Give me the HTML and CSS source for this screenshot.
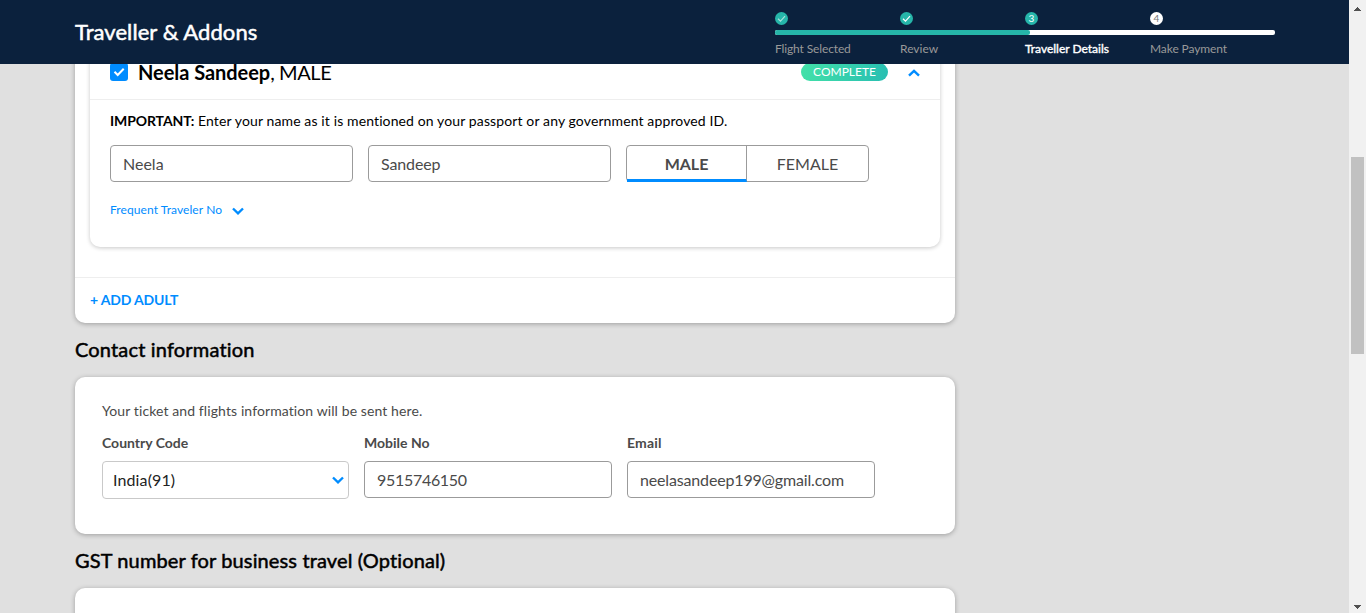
FILE: index.html
```html
<!DOCTYPE html>
<html lang="en">
<head>
<meta charset="utf-8">
<title>Traveller &amp; Addons</title>
<link rel="stylesheet" href="styles.css">
</head>
<body>
<div class="window">
  <div class="page">
    <header class="topbar">
      <h1 class="topbar-title">Traveller &amp; Addons</h1>
      <div class="stepper">
        <div class="step-row">
          <span class="dot dot-done dot-first"><svg class="tick" viewBox="0 0 13 13"><path d="M3 6.7l2.5 2.4 4.5-5"/></svg></span>
          <span class="dot dot-done"><svg class="tick" viewBox="0 0 13 13"><path d="M3 6.7l2.5 2.4 4.5-5"/></svg></span>
          <span class="dot dot-done">3</span>
          <span class="dot dot-next">4</span>
        </div>
        <div class="progress"><div class="progress-fill"></div></div>
        <div class="step-row step-labels">
          <span class="lbl-flight">Flight Selected</span><span class="lbl-review">Review</span><span class="current">Traveller Details</span><span class="lbl-pay">Make Payment</span>
        </div>
      </div>
    </header>
    <main class="content">
      <section class="card travellers">
        <div class="traveller">
          <div class="traveller-head">
            <span class="checkbox"><svg viewBox="0 0 18 18"><path d="M4.5 8.8l3.2 3.2 6-6.2"/></svg></span>
            <span class="traveller-name"><b>Neela Sandeep</b>, MALE</span>
            <span class="badge">COMPLETE</span>
            <svg class="chevron chevron-up" viewBox="0 0 12 8"><path d="M1 6.6l5-4.8 5 4.8"/></svg>
          </div>
          <div class="traveller-body">
            <p class="important"><b>IMPORTANT:</b> Enter your name as it is mentioned on your passport or any government approved ID.</p>
            <div class="name-row">
              <div class="field name-first">Neela</div>
              <div class="field name-last">Sandeep</div>
              <div class="gender"><span class="gender-on">MALE</span><span class="gender-off">FEMALE</span></div>
            </div>
            <div class="frequent"><span class="frequent-text">Frequent Traveler No</span><svg class="chevron" viewBox="0 0 12 8"><path d="M1 1.5l5 4.8 5-4.8"/></svg></div>
          </div>
        </div>
        <div class="add-row"><span class="add-adult">+ ADD ADULT</span></div>
      </section>
      <h2 class="heading heading-contact">Contact information</h2>
      <section class="card contact">
        <p class="hint">Your ticket and flights information will be sent here.</p>
        <div class="contact-grid">
          <div class="group"><span class="label label-country">Country Code</span>
            <div class="field select"><span class="country">India(91)</span><svg class="chevron" viewBox="0 0 12 8"><path d="M1 1.5l5 4.8 5-4.8"/></svg></div></div>
          <div class="group"><span class="label label-mobile">Mobile No</span><div class="field mobile">9515746150</div></div>
          <div class="group"><span class="label label-email">Email</span><div class="field email">neelasandeep199@gmail.com</div></div>
        </div>
      </section>
      <h2 class="heading heading-gst">GST number for business travel (Optional)</h2>
      <section class="card gst"></section>
    </main>
  </div>
  <div class="scrollbar">
    <svg class="arrow" viewBox="0 0 7 4"><path d="M0 4V3h1V2h1V1h1V0h1v1h1v1h1v1h1v1z"/></svg>
    <div class="thumb"></div>
    <svg class="arrow arrow-down" viewBox="0 0 7 4"><path d="M0 0v1h1v1h1v1h1v1h1V3h1V2h1V1h1V0z"/></svg>
  </div>
</div>
</body>
</html>
```
FILE: styles.css
```css
* { box-sizing: border-box; }
body { margin: 0; font-family: Lato, "Liberation Sans", sans-serif; font-variant-ligatures: none; color: #000; background: #e0e0e0; }
h1, h2, p { margin: 0; font-weight: 400; }
svg { display: block; fill: none; }
.window { display: flex; width: 1366px; height: 613px; overflow: hidden; }
.page { display: flex; flex-direction: column; width: 1349px; height: 613px; }
.topbar { display: flex; flex: none; justify-content: space-between; height: 64px; padding: 0 74px 0 75px; background: #0b213d; color: #fff; }
.topbar-title { font-size: 22px; line-height: 64px; letter-spacing: 0.07px; -webkit-text-stroke: 0.5px #fff; white-space: nowrap; }
.stepper { width: 500px; padding-top: 12px; }
.step-row { display: grid; grid-template-columns: repeat(4, 125px); }
.dot { display: flex; align-items: center; justify-content: center; width: 13px; height: 13px; border-radius: 50%; font-size: 10px; line-height: 13px; }
.dot-done { background: #26b5a9; }
.dot-first .tick { opacity: 0.6; }
.dot-next { background: #fff; color: #777; }
.tick { width: 13px; height: 13px; stroke: #fff; stroke-width: 1.2; }
.progress { height: 5px; margin-top: 5px; border-radius: 2px; background: #fff; }
.progress-fill { width: 255px; height: 5px; border-radius: 2px; background: #26b5a9; }
.step-labels { margin-top: 6px; font-size: 12px; line-height: 16px; color: #999; white-space: nowrap; }
.lbl-flight { letter-spacing: -0.13px; }
.lbl-pay { letter-spacing: -0.1px; }
.current { color: #fff; -webkit-text-stroke: 0.4px #fff; }
.content { flex: 1; min-height: 0; overflow: hidden; padding-left: 75px; }
.card { width: 880px; background: #fff; border-radius: 10px; box-shadow: 0 1px 5px rgba(0, 0, 0, 0.3); }
.travellers { height: 278px; margin-top: -19px; display: flex; flex-direction: column; }
.traveller { width: 850px; height: 202px; margin-left: 15px; border-radius: 0 0 10px 10px; box-shadow: 0 1px 4px rgba(0, 0, 0, 0.22); }
.traveller-head { display: flex; align-items: center; height: 55px; padding: 0 20px; border-bottom: 1px solid #eee; }
.checkbox { width: 18px; height: 18px; border-radius: 3px; background: #008cff; }
.checkbox svg { width: 18px; height: 18px; stroke: #fff; stroke-width: 2; }
.traveller-name { flex: 1; margin-left: 10px; font-size: 20px; line-height: 26px; letter-spacing: -0.4px; }
.traveller-name b { font-weight: 700; letter-spacing: -0.05px; }
.badge { width: 87px; height: 18px; margin-right: 20px; border-radius: 9px; background: linear-gradient(100deg, #43e1a8, #28beb2); color: #fff; font-size: 12px; line-height: 18px; text-align: center; }
.chevron { width: 12px; height: 8px; stroke: #008cff; stroke-width: 2.4; }
.chevron-up { margin-top: 1px; }
.traveller-body { padding: 11px 20px 0; }
.important { font-size: 14px; line-height: 20px; letter-spacing: 0.12px; white-space: nowrap; }
.important b { letter-spacing: -0.1px; }
.name-row { display: flex; gap: 15px; margin-top: 14px; }
.field { width: 243px; height: 37px; padding-left: 12px; border: 1px solid #9b9b9b; border-radius: 4px; color: #4a4a4a; font-size: 16px; line-height: 36px; white-space: nowrap; }
.name-last { letter-spacing: -0.12px; }
.gender { display: flex; width: 243px; height: 37px; border: 1px solid #9b9b9b; border-radius: 4px; color: #4a4a4a; font-size: 16px; line-height: 36px; text-align: center; }
.gender-on { width: 120px; height: 36px; border-right: 1px solid #9b9b9b; border-bottom: 3px solid #008cff; font-weight: 700; }
.gender-off { flex: 1; }
.frequent { display: flex; align-items: center; gap: 10px; margin-top: 20px; height: 16px; font-size: 12px; line-height: 16px; color: #008cff; }
.frequent-text { letter-spacing: 0.08px; }
.frequent .chevron { margin-top: 2px; }
.add-row { flex: 1; margin-top: 30px; padding-left: 15px; border-top: 1px solid #eee; color: #008cff; font-size: 14px; font-weight: 700; line-height: 44px; letter-spacing: -0.18px; }
.heading { height: 54px; font-size: 20px; line-height: 52px; -webkit-text-stroke: 0.5px #000; }
.heading-contact { letter-spacing: 0.17px; }
.heading-gst { letter-spacing: 0.13px; }
.contact { height: 157px; padding: 24px 27px 0; color: #4a4a4a; }
.hint { font-size: 14px; line-height: 20px; letter-spacing: 0.1px; }
.contact-grid { display: grid; grid-template-columns: 247px 248px 248px; gap: 15px; margin-top: 12px; }
.label { display: block; height: 28px; font-size: 14px; font-weight: 700; line-height: 20px; }
.label-email { letter-spacing: 0.2px; }
.contact .field { width: 100%; }
.contact .select { display: flex; align-items: center; justify-content: space-between; height: 38px; padding: 0 4px 0 10px; border-color: #c9c9c9; color: #222; }
.country { letter-spacing: 0.12px; }
.mobile { letter-spacing: -0.3px; }
.email { letter-spacing: -0.16px; }
.gst { height: 80px; }
.scrollbar { display: flex; flex-direction: column; align-items: center; width: 17px; height: 613px; padding: 7px 0 4px; background: #f1f1f1; }
.arrow { width: 7px; height: 4px; fill: #505050; }
.thumb { width: 13px; height: 197px; margin-top: 146px; background: #c1c1c1; }
.arrow-down { margin-top: auto; }
```
